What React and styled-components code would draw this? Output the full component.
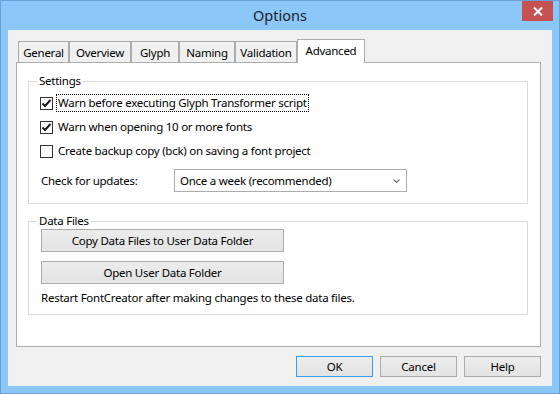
import React from "react";
import styled, { createGlobalStyle, css } from "styled-components";

const Global = createGlobalStyle`
  html, body { margin: 0; padding: 0; background: #ffffff; }
  * { box-sizing: border-box; }
  body { font-family: "Noto Sans", "Open Sans", sans-serif; font-size: 12px; color: #000; }
`;

const FONT = `"Noto Sans", "Open Sans", sans-serif`;

const uiText = css`
  font-family: ${FONT};
  font-size: 11.5px;
  letter-spacing: -0.25px;
  color: #000;
`;

const Window = styled.div`
  width: 560px;
  height: 394px;
  border: 1px solid #6b9fd9;
  background: #8bc7f8;
  display: flex;
  flex-direction: column;
`;

const TitleBar = styled.div`
  height: 29px;
  display: grid;
  grid-template-columns: 1fr auto 1fr;
  align-items: start;
`;

const Title = styled.div`
  grid-column: 2;
  font-family: ${FONT};
  font-size: 14.5px;
  line-height: 29px;
  color: #1e1e1e;
`;

const CloseButton = styled.div`
  grid-column: 3;
  justify-self: end;
  width: 31px;
  height: 20px;
  margin-right: 6px;
  background: #c75050;
  display: flex;
  align-items: center;
  justify-content: center;
`;

const Client = styled.div`
  flex: 1;
  margin: 0 7px 7px 7px;
  background: #f0f0f0;
  padding: 9px 11px 9px 8px;
  display: flex;
  flex-direction: column;
`;

const TabStrip = styled.div`
  height: 23px;
  display: flex;
  align-items: flex-end;
  padding-left: 2px;
  position: relative;
  z-index: 1;
`;

const Tab = styled.div`
  ${uiText};
  width: ${(p) => p.$w}px;
  height: ${(p) => (p.$active ? 24 : 21)}px;
  margin-bottom: ${(p) => (p.$active ? -1 : 0)}px;
  border: 1px solid #acacac;
  border-bottom: none;
  background: ${(p) => (p.$active ? "#ffffff" : "#f0f0f0")};
  display: flex;
  align-items: center;
  justify-content: center;
  padding-bottom: ${(p) => (p.$active ? 3 : 0)}px;
`;

const Panel = styled.div`
  height: 285px;
  border: 1px solid #acacac;
  background: #ffffff;
  padding: 10px 12px 0 11px;
  display: flex;
  flex-direction: column;
  gap: 9px;
`;

const Group = styled.fieldset`
  margin: 0;
  border: 1px solid #dcdcdc;
  padding: ${(p) => p.$pad};
  display: flex;
  flex-direction: column;
  min-width: 0;
`;

const Legend = styled.legend`
  ${uiText};
  padding: 0 2px;
  margin-left: ${(p) => p.$shift}px;
  line-height: 16px;
`;

const CheckRow = styled.label`
  height: 24px;
  display: flex;
  align-items: center;
`;

const Box = styled.span`
  width: 13px;
  height: 13px;
  border: 1px solid #333333;
  background: #ffffff;
  margin-right: 3px;
  display: flex;
  align-items: center;
  justify-content: center;
  flex: none;
`;

const CheckLabel = styled.span`
  ${uiText};
  border: 1px ${(p) => (p.$focused ? "dotted #000" : "solid transparent")};
  padding: 0 1px;
  line-height: 16px;
  white-space: nowrap;
`;

const UpdateRow = styled.div`
  margin-top: 6px;
  height: 23px;
  display: flex;
  align-items: center;
`;

const FieldLabel = styled.span`
  ${uiText};
  width: 134px;
  padding-left: 1px;
`;

const Select = styled.div`
  ${uiText};
  width: 233px;
  height: 23px;
  border: 1px solid #acacac;
  background: #ffffff;
  display: flex;
  align-items: center;
  justify-content: space-between;
  padding: 0 6px 0 5px;
`;

const WideButton = styled.div`
  ${uiText};
  width: 243px;
  height: 23px;
  margin-top: ${(p) => p.$mt}px;
  border: 1px solid #acacac;
  background: linear-gradient(#ececec, #e3e3e3);
  display: flex;
  align-items: center;
  justify-content: center;
`;

const Note = styled.div`
  ${uiText};
  margin-top: 6px;
  line-height: 16px;
`;

const ButtonRow = styled.div`
  margin-top: 9px;
  display: flex;
  justify-content: flex-end;
  gap: 7px;
`;

const DialogButton = styled.div`
  ${uiText};
  width: 77px;
  height: 21px;
  border: 1px solid ${(p) => (p.$default ? "#3c9cf0" : "#acacac")};
  background: linear-gradient(#ececec, #e3e3e3);
  display: flex;
  align-items: center;
  justify-content: center;
`;

const Check = () => (
  <svg width="11" height="11" viewBox="0 0 11 11">
    <path d="M1.5 5.5 L4 8 L9.5 2" fill="none" stroke="#1a1a1a" strokeWidth="2" />
  </svg>
);

const Chevron = () => (
  <svg width="7" height="4" viewBox="0 0 7 4">
    <path d="M0.5 0.5 L3.5 3.5 L6.5 0.5" fill="none" stroke="#707070" strokeWidth="1.1" />
  </svg>
);

const CloseX = () => (
  <svg width="10" height="9" viewBox="0 0 10 9">
    <path d="M1 0.5 L9 8.5 M9 0.5 L1 8.5" stroke="#ffffff" strokeWidth="2" />
  </svg>
);

const tabs = [
  { label: "General", w: 51 },
  { label: "Overview", w: 62 },
  { label: "Glyph", w: 48 },
  { label: "Naming", w: 56 },
  { label: "Validation", w: 62 },
  { label: "Advanced", w: 68, active: true },
];

const checks = [
  { label: "Warn before executing Glyph Transformer script", checked: true, focused: true },
  { label: "Warn when opening 10 or more fonts", checked: true },
  { label: "Create backup copy (bck) on saving a font project", checked: false },
];

export default function App() {
  return (
    <>
      <Global />
      <Window>
        <TitleBar>
          <Title>Options</Title>
          <CloseButton>
            <CloseX />
          </CloseButton>
        </TitleBar>
        <Client>
          <TabStrip>
            {tabs.map((t) => (
              <Tab key={t.label} $w={t.w} $active={t.active}>
                {t.label}
              </Tab>
            ))}
          </TabStrip>
          <Panel>
            <Group $pad="2px 11px 11px 11px">
              <Legend $shift={-3}>Settings</Legend>
              {checks.map((c) => (
                <CheckRow key={c.label}>
                  <Box>{c.checked && <Check />}</Box>
                  <CheckLabel $focused={c.focused}>{c.label}</CheckLabel>
                </CheckRow>
              ))}
              <UpdateRow>
                <FieldLabel>Check for updates:</FieldLabel>
                <Select>
                  <span>Once a week (recommended)</span>
                  <Chevron />
                </Select>
              </UpdateRow>
            </Group>
            <Group $pad="0 12px 8px 12px">
              <Legend $shift={-4}>Data Files</Legend>
              <WideButton $mt={0}>Copy Data Files to User Data Folder</WideButton>
              <WideButton $mt={9}>Open User Data Folder</WideButton>
              <Note>Restart FontCreator after making changes to these data files.</Note>
            </Group>
          </Panel>
          <ButtonRow>
            <DialogButton $default>OK</DialogButton>
            <DialogButton>Cancel</DialogButton>
            <DialogButton>Help</DialogButton>
          </ButtonRow>
        </Client>
      </Window>
    </>
  );
}
